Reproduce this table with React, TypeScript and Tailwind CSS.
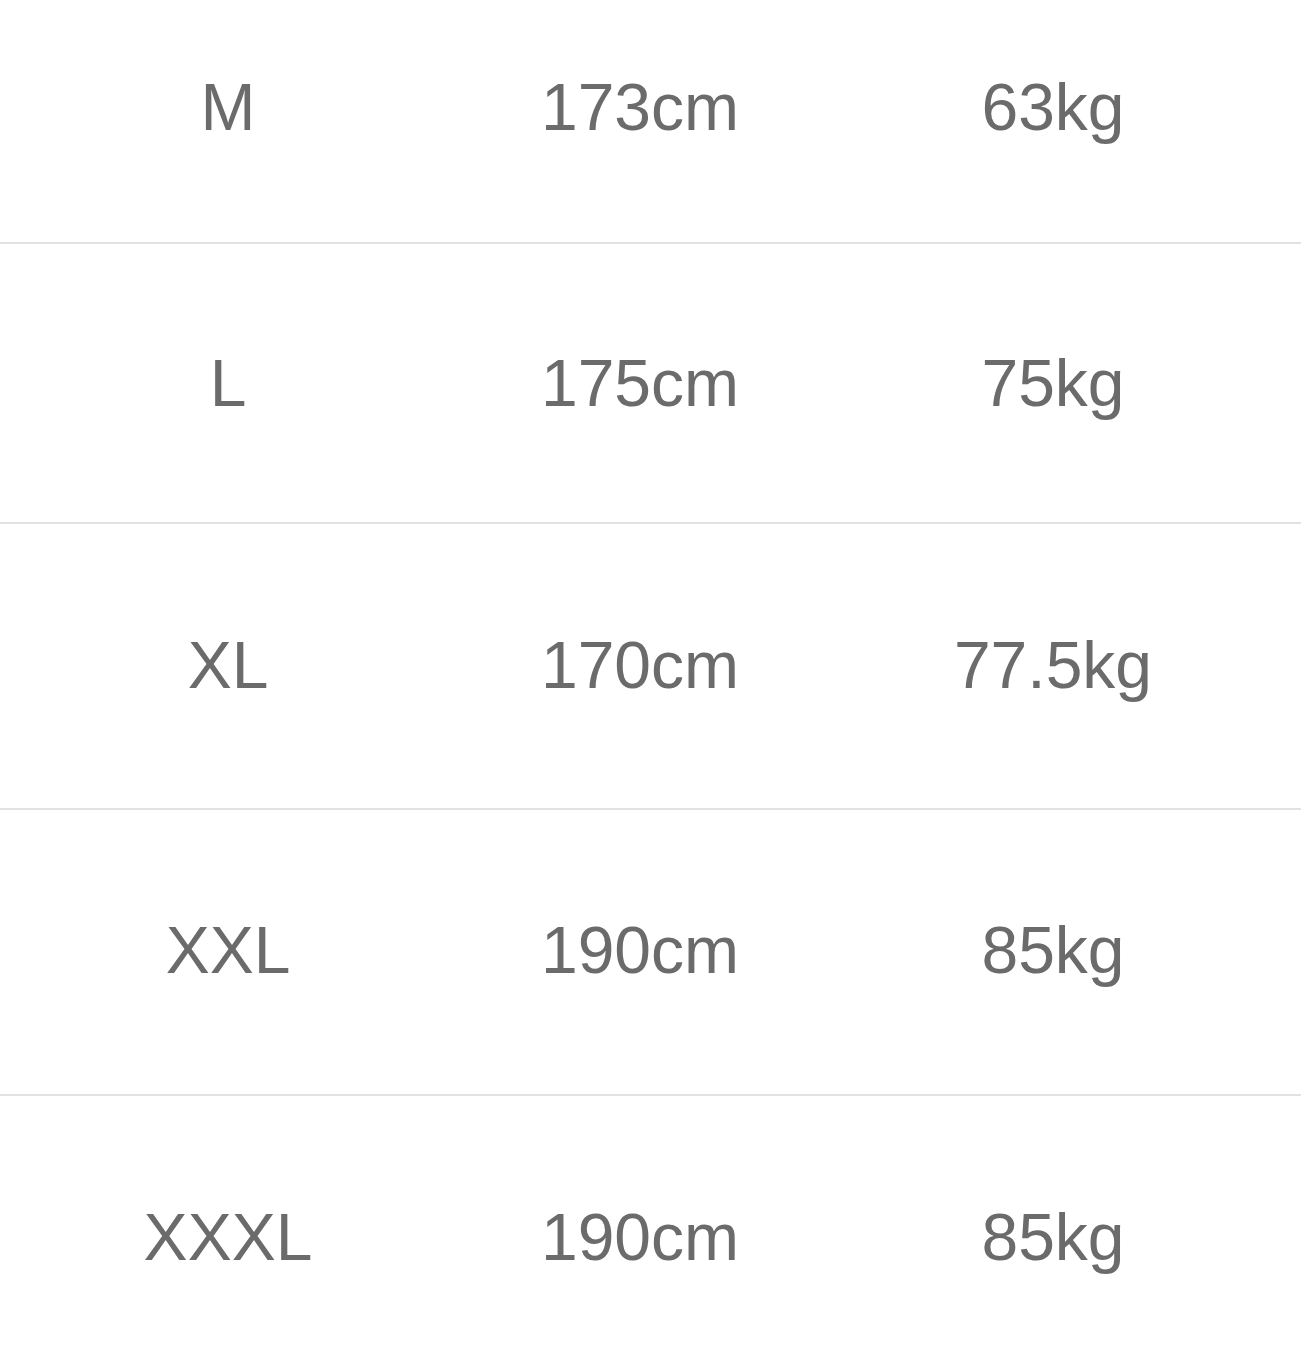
const rows = [
  { size: "M", height: "173cm", weight: "63kg", cls: "h-[244px] pt-[69px] border-b-2" },
  { size: "L", height: "175cm", weight: "75kg", cls: "h-[280px] pt-[101px] border-b-2" },
  { size: "XL", height: "170cm", weight: "77.5kg", cls: "h-[286px] pt-[103px] border-b-2" },
  { size: "XXL", height: "190cm", weight: "85kg", cls: "h-[286px] pt-[102px] border-b-2" },
  { size: "XXXL", height: "190cm", weight: "85kg", cls: "h-[261px] pt-[103px]" },
];

export default function App() {
  return (
    <div className="w-[1301px] h-[1357px] overflow-hidden bg-white font-['Liberation_Sans',Arial,sans-serif] text-[#6b6b6b]">
      {rows.map((row) => (
        <div
          key={row.size}
          className={`grid grid-cols-[456px_368px_458px] border-[#e2e2e2] ${row.cls}`}
        >
          <div className="text-center text-[66px] leading-[76px]">{row.size}</div>
          <div className="text-center text-[66px] leading-[76px]">{row.height}</div>
          <div className="text-center text-[66px] leading-[76px]">{row.weight}</div>
        </div>
      ))}
    </div>
  );
}
